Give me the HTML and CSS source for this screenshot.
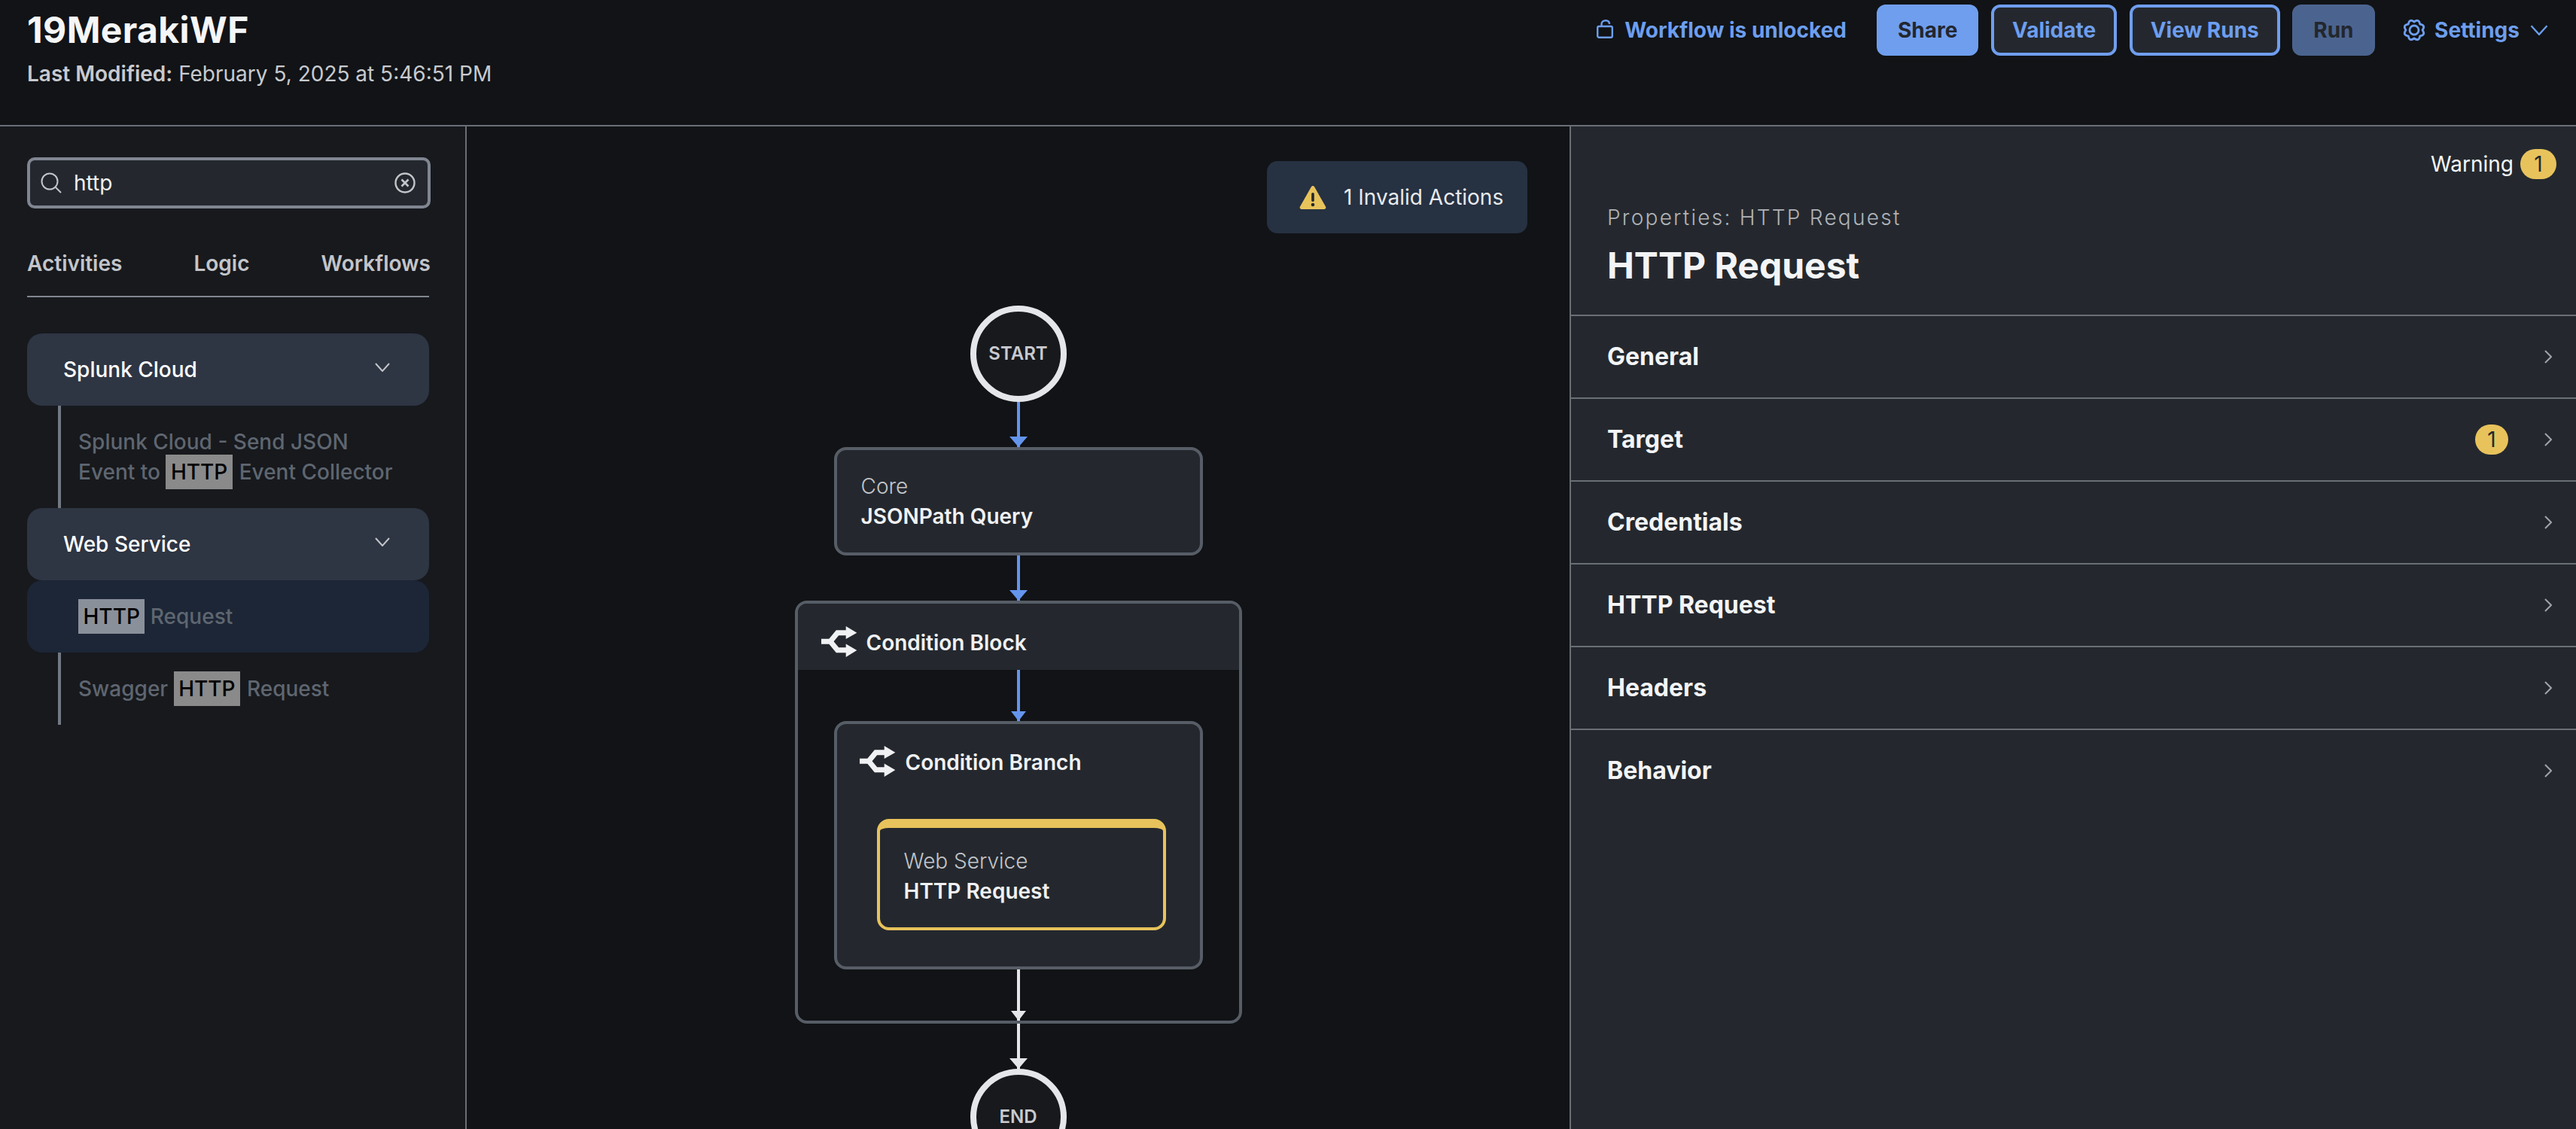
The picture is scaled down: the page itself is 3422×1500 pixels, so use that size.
FILE: index.html
```html
<!DOCTYPE html>
<html lang="en">
<head>
<meta charset="utf-8">
<title>19MerakiWF</title>
<link rel="stylesheet" href="styles.css">
</head>
<body>
<svg class="defs" width="0" height="0" aria-hidden="true">
  <defs>
    <symbol id="fork" viewBox="0 0 48 41">
      <path d="M0 20.200H12L21.500 8.700H36M12 20.200L21.500 31.700H36" fill="none" stroke="currentColor" stroke-width="7"/>
      <path d="M32.700 0L47.300 8.700L32.700 17Z M32.700 23.500L47.300 32L32.700 41Z" fill="currentColor"/>
    </symbol>
    <symbol id="chev-down" viewBox="0 0 20 12">
      <path d="M1 1L10 11L19 1" fill="none" stroke="currentColor" stroke-width="2"/>
    </symbol>
    <symbol id="chev-right" viewBox="0 0 10 18">
      <path d="M1 1L9 9L1 17" fill="none" stroke="currentColor" stroke-width="2"/>
    </symbol>
  </defs>
</svg>
<header class="topbar">
  <div class="titles">
    <h1 class="wf-name">19MerakiWF</h1>
    <p class="modified"><b>Last Modified:</b> February 5, 2025 at 5:46:51 PM</p>
  </div>
  <div class="actions">
    <span class="lock-state">
      <svg class="lock-icon" viewBox="0 0 22 25" aria-hidden="true"><rect x="1.200" y="9" width="19.600" height="14.800" rx="2" fill="none" stroke="currentColor" stroke-width="2.400"/><path d="M6.500 8V6C6.500 3 9 1.200 12 1.200S17 3 17 6" fill="none" stroke="currentColor" stroke-width="2.400"/></svg>
      Workflow is unlocked
    </span>
    <button class="btn btn-primary">Share</button>
    <button class="btn btn-outline">Validate</button>
    <button class="btn btn-outline">View Runs</button>
    <button class="btn btn-disabled">Run</button>
    <span class="settings">
      <svg class="gear-icon" viewBox="0 0 32 32" aria-hidden="true"><circle cx="16" cy="16" r="6"/><path d="M27 16Q31.700 22.500 23.780 23.780Q22.500 31.700 16 27Q9.500 31.700 8.220 23.780Q0.300 22.500 5 16Q0.300 9.500 8.220 8.220Q9.500 0.300 16 5Q22.500 0.300 23.780 8.220Q31.700 9.500 27 16Z"/></svg>
      Settings
      <svg class="settings-chev"><use href="#chev-down"/></svg>
    </span>
  </div>
</header>
<main class="workspace">
  <aside class="palette">
    <div class="search">
      <svg class="search-icon" viewBox="0 0 28 28" aria-hidden="true"><circle cx="12" cy="12" r="10.500" fill="none" stroke="currentColor" stroke-width="2"/><path d="M19.500 19.500L27 27" fill="none" stroke="currentColor" stroke-width="2"/></svg>
      <span class="search-text">http</span>
      <svg class="clear-icon" viewBox="0 0 28 28" aria-hidden="true"><circle cx="14" cy="14" r="12.500" fill="none" stroke="currentColor" stroke-width="2.400"/><path d="M9.500 9.500L18.500 18.500M18.500 9.500L9.500 18.500" fill="none" stroke="currentColor" stroke-width="2.600"/></svg>
    </div>
    <nav class="tabs">
      <span class="tab">Activities</span>
      <span class="tab">Logic</span>
      <span class="tab">Workflows</span>
    </nav>
    <div class="group-head"><span>Splunk Cloud</span><svg class="group-chev"><use href="#chev-down"/></svg></div>
    <div class="item">Splunk Cloud - Send JSON<br>Event to <mark class="hit">HTTP</mark> Event Collector</div>
    <div class="group-head"><span>Web Service</span><svg class="group-chev"><use href="#chev-down"/></svg></div>
    <div class="item item-selected"><mark class="hit hit-selected">HTTP</mark> Request</div>
    <div class="item">Swagger <mark class="hit">HTTP</mark> Request</div>
  </aside>

  <section class="canvas">
    <div class="invalid-banner">
      <svg class="warn-icon" viewBox="0 0 36 32" aria-hidden="true"><path d="M18 1C19 1 19.800 1.600 20.300 2.600L35 28.500C36 30.300 34.800 32 33 32H3C1.200 32 0 30.300 1 28.500L15.700 2.600C16.200 1.600 17 1 18 1Z" fill="#e8c35c"/><rect x="16.200" y="10" width="3.600" height="12" rx="1.800" fill="#24282e"/><circle cx="18" cy="26" r="2.300" fill="#24282e"/></svg>
      <span>1 Invalid Actions</span>
    </div>
    <div class="diagram">
      <div class="terminal">START</div>
      <div class="conn conn-blue"></div>
      <div class="node">
        <div class="node-kind">Core</div>
        <div class="node-name">JSONPath Query</div>
      </div>
      <div class="conn conn-blue"></div>
      <div class="block">
        <div class="block-head">
          <svg class="fork-icon"><use href="#fork"/></svg>
          <span class="head-label">Condition Block</span>
        </div>
        <div class="conn conn-tall conn-blue conn-small"></div>
        <div class="branch">
          <div class="branch-head">
            <svg class="fork-icon"><use href="#fork"/></svg>
            <span class="head-label">Condition Branch</span>
          </div>
          <div class="node node-warning">
            <div class="node-kind">Web Service</div>
            <div class="node-name">HTTP Request</div>
          </div>
        </div>
        <div class="conn conn-tall conn-small"></div>
      </div>
      <div class="conn"></div>
      <div class="terminal">END</div>
    </div>
  </section>

  <aside class="props">
    <div class="warning-line"><span>Warning</span><span class="badge badge-wide">1</span></div>
    <div class="props-head">
      <div class="props-kicker">Properties: HTTP Request</div>
      <h2 class="props-title">HTTP Request</h2>
    </div>
    <div class="row"><span class="row-label">General</span><svg class="row-chev"><use href="#chev-right"/></svg></div>
    <div class="row"><span class="row-label">Target</span><span class="badge">1</span><svg class="row-chev"><use href="#chev-right"/></svg></div>
    <div class="row"><span class="row-label">Credentials</span><svg class="row-chev"><use href="#chev-right"/></svg></div>
    <div class="row"><span class="row-label">HTTP Request</span><svg class="row-chev"><use href="#chev-right"/></svg></div>
    <div class="row"><span class="row-label">Headers</span><svg class="row-chev"><use href="#chev-right"/></svg></div>
    <div class="row"><span class="row-label">Behavior</span><svg class="row-chev"><use href="#chev-right"/></svg></div>
  </aside>
</main>
</body>
</html>
```

FILE: styles.css
```css
* { box-sizing: border-box; }
html, body { margin: 0; height: 100%; }
body {
  height: 1500px;
  overflow: hidden;
  display: flex;
  flex-direction: column;
  background: #111316;
  color: #f0f1f3;
  font-family: Inter, "Liberation Sans", sans-serif;
  font-size: 28px;
  line-height: 40px;
}
.defs { position: absolute; }

/* top bar */
.topbar {
  flex: none;
  height: 168px;
  display: flex;
  justify-content: space-between;
  padding: 6px 37px 0 36px;
  border-bottom: 2px solid #6a6e76;
}
.wf-name { margin: 6px 0 0; font-size: 48px; line-height: 56px; font-weight: 700; letter-spacing: 0.4px; color: #f5f6f7; }
.modified { margin: 10px 0 0; font-size: 28px; line-height: 40px; font-weight: 400; color: #c8cacf; }
.modified b { font-weight: 600; }
.actions { display: flex; align-items: center; height: 68px; color: #6d9eef; font-weight: 700; }
.lock-state { display: flex; align-items: center; gap: 15px; margin-right: 40px; }
.lock-icon { width: 22px; height: 25px; margin-top: -3px; }
.btn {
  height: 68px;
  margin-right: 16.500px;
  padding: 0 24px;
  border: 4px solid #6f9eee;
  border-radius: 12px;
  font: inherit;
  color: inherit;
}
.btn-primary { background: #6f9eee; color: #23272e; }
.btn-outline { background: #24282e; }
.btn-disabled { background: #4b648f; border-color: #4b648f; color: #23272e; }
.settings { display: flex; align-items: center; margin-left: 20px; }
.gear-icon { width: 32px; height: 32px; margin-right: 11px; fill: none; stroke: currentColor; stroke-width: 2.800; stroke-linejoin: round; }
.settings-chev { width: 24px; height: 14px; margin-left: 14px; color: #6d9eef; }

/* workspace */
.workspace { flex: 1; min-height: 0; display: flex; }

/* left palette */
.palette {
  flex: none;
  width: 620px;
  padding: 41px 48px 0 36px;
  background: #17191d;
  border-right: 2px solid #6a6e76;
}
.search {
  display: flex;
  align-items: center;
  width: 536px;
  height: 68px;
  padding: 0 16px 0 14px;
  background: #24282e;
  border: 4px solid #808691;
  border-radius: 10px;
  color: #d8dade;
}
.search-icon { width: 28px; height: 28px; margin-right: 16px; color: #c3c5ca; }
.search-text { flex: 1; font-weight: 400; color: #f0f1f3; }
.clear-icon { width: 28px; height: 28px; color: #c3c5ca; }
.tabs {
  display: flex;
  justify-content: space-between;
  width: 536px;
  height: 74px;
  margin: 44px 0 48px;
  padding-top: 9px;
  color: #c3c5ca;
  font-weight: 600;
  position: relative;
}
.tabs::after {
  content: "";
  position: absolute;
  left: 0;
  right: 2px;
  bottom: 0;
  height: 2px;
  background: #81868f;
}
.group-head {
  display: flex;
  align-items: center;
  justify-content: space-between;
  height: 96px;
  padding: 0 52px 0 48px;
  background: #2e3543;
  border-radius: 20px;
  color: #fff;
  font-weight: 500;
}
.group-chev { width: 20px; height: 12px; margin-top: -6px; color: #c3c5ca; }
.item {
  position: relative;
  padding: 28px 0 28px 68px;
  color: #5f6670;
  font-weight: 500;
}
.item::before {
  content: "";
  position: absolute;
  left: 41px;
  top: 0;
  bottom: 0;
  width: 4px;
  background: #727983;
}
.item-selected { background: #1c2636; border-radius: 20px; }
.item-selected::before { display: none; }
.hit { padding: 6px 6.500px; margin-right: 1.500px; background: #8a8a8a; color: #000; font-weight: 500; }
.hit-selected { background: #8a909a; margin-right: 0; }

/* canvas */
.canvas { flex: 1; min-width: 0; position: relative; }
.invalid-banner {
  position: absolute;
  top: 46px;
  right: 56px;
  display: flex;
  align-items: center;
  gap: 23px;
  width: 346px;
  height: 96px;
  padding-left: 43px;
  background: #263142;
  border-radius: 14px;
  font-weight: 400;
  color: #e8e9eb;
}
.warn-icon { width: 36px; height: 32px; }
.diagram { display: flex; flex-direction: column; align-items: center; padding-top: 238px; }
.terminal {
  flex: none;
  width: 128px;
  height: 128px;
  display: flex;
  align-items: center;
  justify-content: center;
  background: #17191d;
  border: 8px solid #e4e6ea;
  border-radius: 50%;
  font-size: 24px;
  font-weight: 600;
  color: #c8cacf;
}
.conn {
  position: relative;
  flex: none;
  width: 4px;
  height: 60px;
  background: #e4e6ea;
  color: #e4e6ea;
}
.conn::after {
  content: "";
  position: absolute;
  left: -10px;
  bottom: 0;
  border-left: 12px solid transparent;
  border-right: 12px solid transparent;
  border-top: 14px solid currentColor;
}
.conn-blue { background: #6495ed; color: #6495ed; }
.conn-tall { height: 68px; }
.conn-small::after { left: -8px; border-left-width: 10px; border-right-width: 10px; border-top-width: 13px; }
.node {
  flex: none;
  width: 490px;
  height: 144px;
  padding: 28px 32px;
  background: #24282e;
  border: 4px solid #575d66;
  border-radius: 16px;
}
.node-kind { font-weight: 300; color: #c3c5ca; }
.node-name { font-weight: 600; color: #f0f1f3; }
.block {
  flex: none;
  width: 594px;
  height: 562px;
  display: flex;
  flex-direction: column;
  align-items: center;
  border: 4px solid #575d66;
  border-radius: 16px;
}
.block-head {
  flex: none;
  align-self: stretch;
  display: flex;
  align-items: center;
  gap: 12px;
  height: 88px;
  padding: 12px 0 0 31px;
  background: #24282e;
  border-radius: 12px 12px 0 0;
  font-weight: 600;
}
.head-label { padding-top: 3px; }
.fork-icon { flex: none; width: 48px; height: 41px; color: #f0f1f3; }
.branch {
  flex: none;
  width: 490px;
  height: 330px;
  padding: 29px 0 0 30px;
  background: #24282e;
  border: 4px solid #575d66;
  border-radius: 16px;
}
.branch-head { display: flex; align-items: center; gap: 13px; height: 41px; margin-bottom: 56px; font-weight: 600; }
.node-warning {
  width: 384px;
  height: 148px;
  margin-left: 23px;
  padding: 24px 32px 28px;
  border: 4px solid #e8c35c;
  border-top-width: 12px;
}

/* right properties */
.props { flex: none; width: 1337px; background: #24282e; border-left: 2px solid #6a6e76; }
.warning-line {
  display: flex;
  justify-content: flex-end;
  align-items: center;
  gap: 9px;
  padding: 30px 26px 0 0;
  color: #f5f6f7;
  font-weight: 400;
}
.badge {
  display: flex;
  align-items: center;
  justify-content: center;
  width: 44px;
  height: 40px;
  background: #e8c35c;
  border-radius: 20px;
  color: #24282e;
  font-weight: 400;
}
.badge-wide { width: 48px; }
.props-head { height: 180px; padding: 31px 0 0 48px; }
.props-kicker { font-weight: 300; letter-spacing: 2.250px; color: #b0b3b8; }
.props-title { margin: 16px 0 0; font-size: 48px; line-height: 56px; font-weight: 700; color: #f3f4f6; }
.row {
  display: flex;
  align-items: center;
  height: 110px;
  padding: 0 32px 0 48px;
  border-top: 2px solid #6a6e76;
}
.row-label { flex: 1; font-size: 32px; font-weight: 700; color: #f3f4f6; }
.row-chev { width: 10px; height: 18px; margin-left: 48px; color: #a0a3a8; }
```
